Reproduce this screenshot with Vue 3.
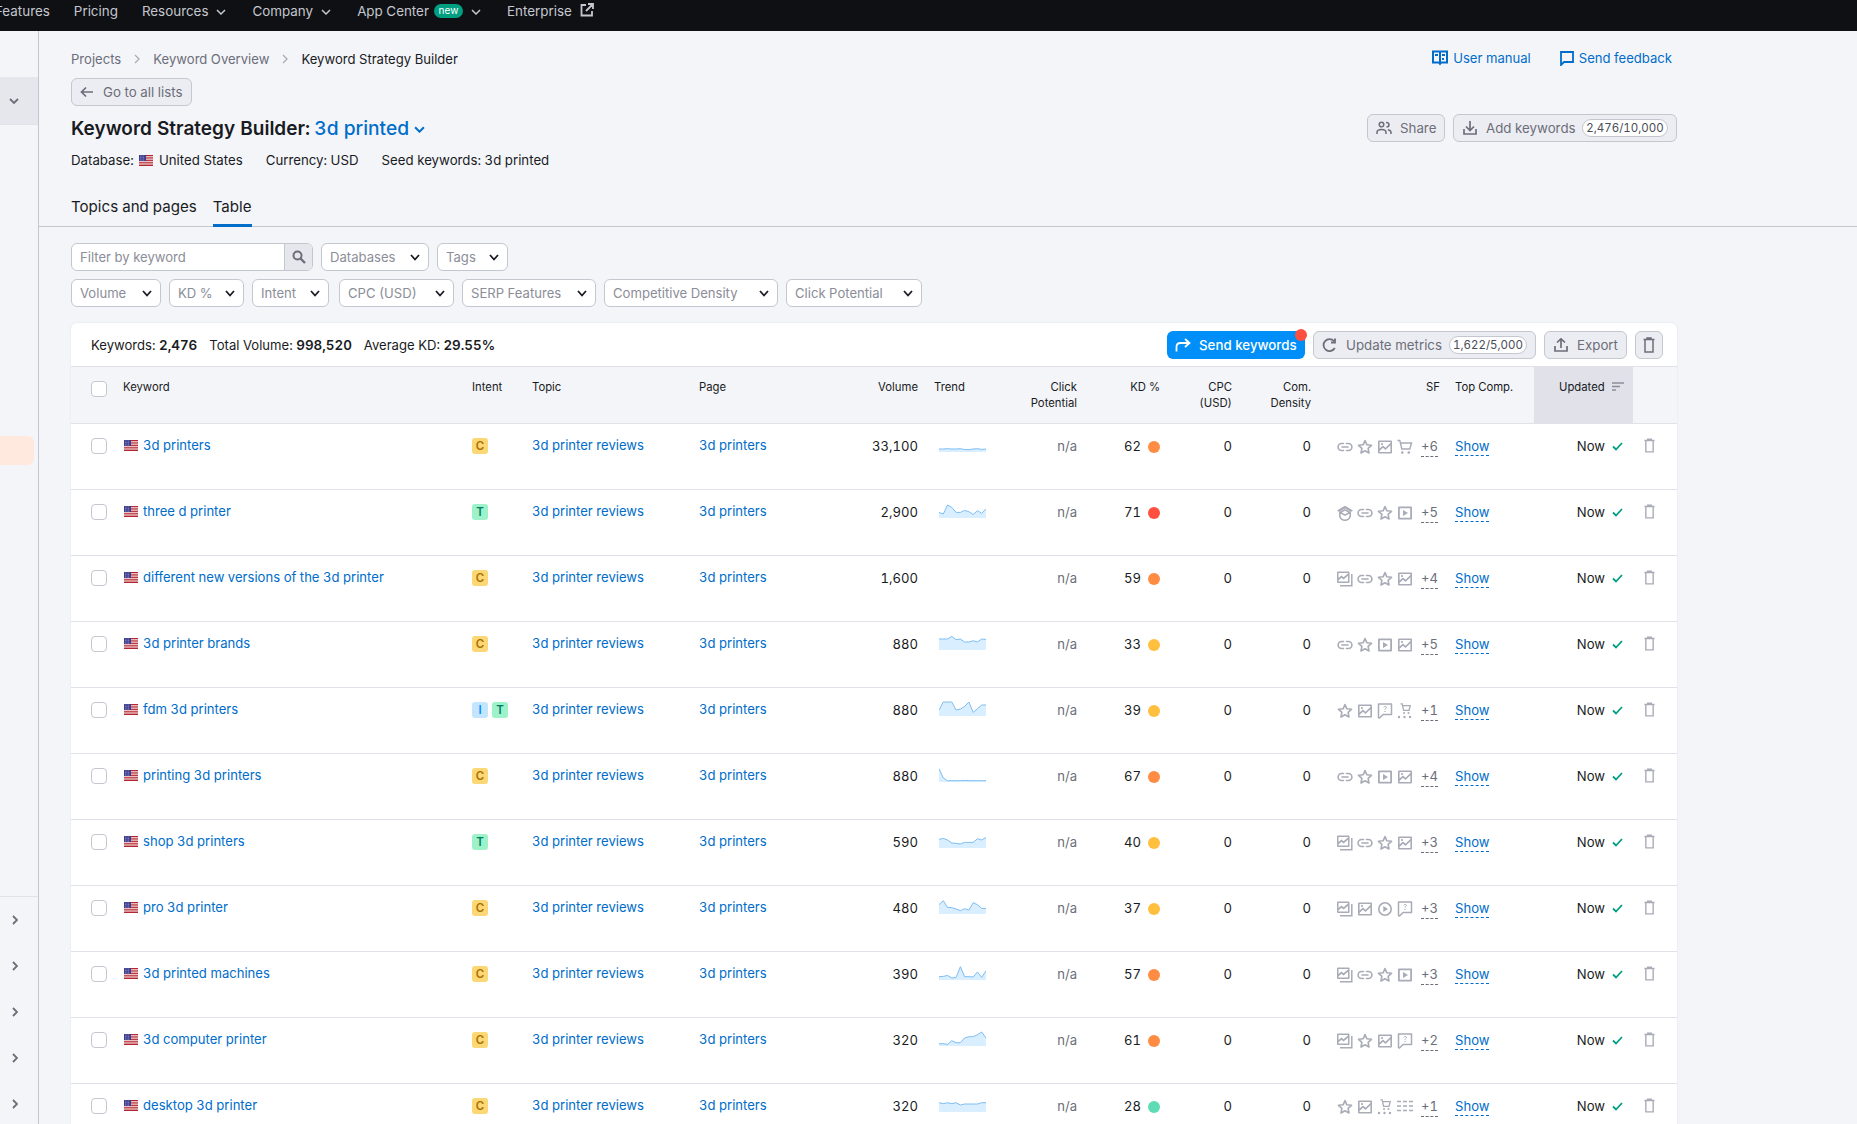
<template>
  <div class="page">
    <svg class="defs" width="0" height="0">
      <symbol id="i-link" viewBox="0 0 16 16">
        <path d="M6.5 4.5H4.6a3.5 3.5 0 0 0 0 7h1.9M9.5 4.5h1.9a3.5 3.5 0 0 1 0 7H9.5M5 8h6" fill="none" stroke="currentColor" stroke-width="1.6" stroke-linecap="round" />
      </symbol>
      <symbol id="i-star" viewBox="0 0 16 16">
        <path d="M8 1.600l1.900 4.200 4.600.5-3.400 3.100.9 4.600L8 11.700 4 14l.9-4.600L1.500 6.300l4.600-.5z" fill="none" stroke="currentColor" stroke-width="1.6" stroke-linejoin="round" />
      </symbol>
      <symbol id="i-image" viewBox="0 0 16 16">
        <path fill-rule="evenodd" d="M2 1.500h12a1 1 0 0 1 1 1v11a1 1 0 0 1-1 1H2a1 1 0 0 1-1-1v-11a1 1 0 0 1 1-1zM2.600 3v6.500L6 6.500l2.500 2.300L13.400 4V3zM13.400 6.200L8.500 11 6 8.700l-3.400 3V13h10.800z" fill="currentColor" />
        <circle cx="5" cy="5" r="1.100" fill="currentColor" />
      </symbol>
      <symbol id="i-stack" viewBox="0 0 16 16">
        <path fill-rule="evenodd" d="M1 .5h10.500a1 1 0 0 1 1 1V11a1 1 0 0 1-1 1H1a1 1 0 0 1-1-1V1.500a1 1 0 0 1 1-1zM1.500 2v5l3-2.500 2 1.800L11 2.500V2zM11 4.700L6.500 8.500l-2-1.800-3 2.500v1.300H11z" fill="currentColor" />
        <path d="M14.800 3v11.800H3" fill="none" stroke="currentColor" stroke-width="1.500" />
      </symbol>
      <symbol id="i-cart" viewBox="0 0 16 16">
        <path d="M.5 1.500h2.300l2 8.500h8l1.700-6H4" fill="none" stroke="currentColor" stroke-width="1.400" />
        <circle cx="5.300" cy="13.500" r="1.300" fill="currentColor" />
        <circle cx="11.800" cy="13.500" r="1.300" fill="currentColor" />
      </symbol>
      <symbol id="i-cartdots" viewBox="0 0 16 16">
        <path d="M3.500 .8h1.700l1.400 6.500h5.400l1.200-4.700H5.500" fill="none" stroke="currentColor" stroke-width="1.300" />
        <circle cx="7" cy="10" r="1" fill="currentColor" />
        <circle cx="11.500" cy="10" r="1" fill="currentColor" />
        <circle cx="2" cy="14" r="1.200" fill="currentColor" />
        <circle cx="7.500" cy="14" r="1.200" fill="currentColor" />
        <circle cx="13" cy="14" r="1.200" fill="currentColor" />
      </symbol>
      <symbol id="i-play" viewBox="0 0 16 16">
        <path fill-rule="evenodd" d="M2 1.500h12a1 1 0 0 1 1 1v11a1 1 0 0 1-1 1H2a1 1 0 0 1-1-1v-11a1 1 0 0 1 1-1zM2.800 3.200v9.600h10.400V3.200z" fill="currentColor" />
        <path d="M6 5l5 3-5 3z" fill="currentColor" />
      </symbol>
      <symbol id="i-playc" viewBox="0 0 16 16">
        <circle cx="8" cy="8" r="6.200" fill="none" stroke="currentColor" stroke-width="1.600" />
        <path d="M6.300 5l4.700 3-4.700 3z" fill="currentColor" />
      </symbol>
      <symbol id="i-question" viewBox="0 0 16 16">
        <path d="M1.500 1h13v10.500H6L2.500 15l-1-.5z" fill="none" stroke="currentColor" stroke-width="1.500" stroke-linejoin="round" />
        <path d="M6.800 4.300c.3-1 2.600-1.200 2.700.2.100 1-1.500 1-1.500 2.100" fill="none" stroke="currentColor" stroke-width="1" />
        <circle cx="8" cy="8.400" r=".7" fill="currentColor" />
      </symbol>
      <symbol id="i-cap" viewBox="0 0 16 16">
        <path d="M8 .8L16 5.500l-2.200 1.400L8 3.400 2.200 6.900 0 5.500z" fill="currentColor" />
        <path d="M2.800 7v4.500C3.800 14 6 15.300 8 15.300s4.200-1.300 5.200-3.800V7M3.200 7.500L8 4.800l4.800 2.700L8 10.200z" fill="none" stroke="currentColor" stroke-width="1.500" />
      </symbol>
      <symbol id="i-list" viewBox="0 0 16 16">
        <path d="M0 2.500h4M6 2.500h4M12 2.500h4M0 7h4M6 7h4M12 7h4M0 11.500h4M6 11.500h4M12 11.500h4" fill="none" stroke="currentColor" stroke-width="1.500" />
      </symbol>
      <symbol id="i-flag" viewBox="0 0 14 11">
        <rect width="14" height="11" fill="#fff" />
        <path d="M0 .5h14M0 2.200h14M0 3.900h14M0 5.600h14M0 7.300h14M0 9h14M0 10.500h14" stroke="#b3262f" stroke-width="1" />
        <rect width="7" height="6" fill="#3c3b8e" />
        <path d="M1 1h5M1 2.500h5M1 4h5M1 5.200h5" stroke="#b9bcdc" stroke-width=".6" stroke-dasharray=".8 .8" />
      </symbol>
      <symbol id="i-trash" viewBox="0 0 12 16">
        <path d="M.5 2.500h11M4 2.500V1h4v1.500M2 2.500V15h8V2.500" fill="none" stroke="currentColor" stroke-width="1.500" />
      </symbol>
    </svg>

    <nav class="topnav">
      <span class="nav-item first">Features</span>
      <span class="nav-item">Pricing</span>
      <span class="nav-item">Resources<svg class="nav-chev" viewBox="0 0 10 6"><path d="M1 1l4 4 4-4" /></svg></span>
      <span class="nav-item">Company<svg class="nav-chev" viewBox="0 0 10 6"><path d="M1 1l4 4 4-4" /></svg></span>
      <span class="nav-item">App Center<span class="new">new</span><svg class="nav-chev" viewBox="0 0 10 6"><path d="M1 1l4 4 4-4" /></svg></span>
      <span class="nav-item">Enterprise
        <svg class="nav-ext" viewBox="0 0 14 14"><path d="M6 2H1.500v10.500H12V8M8 1h5v5M13 1L6 8" /></svg>
      </span>
    </nav>

    <div class="layout">
      <aside class="sidebar">
        <div class="side-panel"><svg class="side-chev" viewBox="0 0 10 6"><path d="M1 1l4 4 4-4" /></svg></div>
        <div class="side-active"></div>
        <div class="side-foot">
          <div v-for="n in 5" :key="n" class="side-row">
            <svg class="side-right" viewBox="0 0 6 10"><path d="M1 1l4 4-4 4" /></svg>
          </div>
        </div>
      </aside>

      <main class="main">
        <div class="pad">
          <div class="crumbs-row">
            <div class="crumbs">
              <span>Projects</span>
              <svg class="crumb-sep" viewBox="0 0 6 10"><path d="M1 1l4 4-4 4" /></svg>
              <span>Keyword Overview</span>
              <svg class="crumb-sep" viewBox="0 0 6 10"><path d="M1 1l4 4-4 4" /></svg>
              <span class="cur">Keyword Strategy Builder</span>
            </div>
            <div class="help">
              <a class="help-link">
                <svg class="help-ic" viewBox="0 0 16 16">
                  <path fill-rule="evenodd" d="M0 .5h16v13H9.500L8 15.500 6.500 13.500H0zM2 2.500v9h5v-9zM9 2.500v9h5v-9z" fill="#006dca" />
                  <path d="M3 4h3v2H3zM10 4h3v2h-3zM10 8h2v2h-2z" fill="#006dca" />
                </svg>
                User manual
              </a>
              <a class="help-link feedback">
                <svg class="help-ic small" viewBox="0 0 14 15"><path d="M1 1h12v10H4l-3 3z" fill="none" stroke="#006dca" stroke-width="1.800" /></svg>
                Send feedback
              </a>
            </div>
          </div>

          <button class="btn back">
            <svg class="btn-ic" viewBox="0 0 14 12"><path d="M13 6H2M6 1.500L1.500 6 6 10.500" fill="none" stroke="currentColor" stroke-width="1.700" /></svg>
            Go to all lists
          </button>

          <div class="title-row">
            <h1 class="title">Keyword Strategy Builder: <span class="title-name">3d printed</span>
              <svg class="title-chev" viewBox="0 0 10 6"><path d="M1 1l4 4 4-4" /></svg>
            </h1>
            <div class="title-actions">
              <button class="btn share">
                <svg class="btn-ic wide" viewBox="0 0 16 14">
                  <circle cx="5.500" cy="3.500" r="2.300" fill="none" stroke="currentColor" stroke-width="1.500" />
                  <path d="M1 13v-1.500C1 9.500 3 8.500 5.500 8.500S10 9.500 10 11.500V13M10 1.500c2 0 3 1 3 2.200s-1 2.200-2.500 2.300M12 8.800c1.800.3 3 1.200 3 3V13" fill="none" stroke="currentColor" stroke-width="1.500" />
                </svg>
                Share
              </button>
              <button class="btn add">
                <svg class="btn-ic wide" viewBox="0 0 14 14"><path d="M7 0v9M3 5.500L7 9.500l4-4M1 8v5h12V8" fill="none" stroke="currentColor" stroke-width="1.700" /></svg>
                Add keywords
                <span class="pill pill-add">2,476/10,000</span>
              </button>
            </div>
          </div>

          <div class="meta">
            <span class="meta-item">Database: <svg class="flag top"><use href="#i-flag" /></svg> United States</span>
            <span class="meta-item">Currency: USD</span>
            <span class="meta-item">Seed keywords: 3d printed</span>
          </div>
        </div>

        <div class="tabs">
          <span class="tab">Topics and pages</span>
          <span class="tab active">Table</span>
        </div>

        <div class="pad">
          <div class="filters">
            <div class="search">
              <span class="search-text">Filter by keyword</span>
              <span class="search-btn">
                <svg viewBox="0 0 14 14" width="14" height="14"><circle cx="5.500" cy="5.500" r="4" fill="none" stroke="#6c6e79" stroke-width="2" /><path d="M8.500 8.500l4.500 4.500" stroke="#6c6e79" stroke-width="2.400" /></svg>
              </span>
            </div>
            <span v-for="f in topFilters" :key="f.label" class="select" :style="{ width: f.w + 'px' }">
              {{ f.label }}
              <svg class="sel-chev" viewBox="0 0 10 7"><path d="M1 1l4 4.500L9 1" /></svg>
            </span>
          </div>
          <div class="filters second">
            <span v-for="f in filters" :key="f.label" class="select" :class="{ spaced: f.spaced }" :style="{ width: f.w + 'px' }">
              {{ f.label }}
              <svg class="sel-chev" viewBox="0 0 10 7"><path d="M1 1l4 4.500L9 1" /></svg>
            </span>
          </div>

          <section class="card">
            <div class="summary">
              <div class="totals">
                <span>Keywords: <b>2,476</b></span>
                <span>Total Volume: <b>998,520</b></span>
                <span>Average KD: <b>29.55%</b></span>
              </div>
              <div class="summary-actions">
                <button class="btn send">
                  <svg class="btn-ic wide" viewBox="0 0 16 14"><path d="M1.500 13.500V9c0-2.500 1.500-4 4-4H14M10 1l4.500 4L10 9" fill="none" stroke="#fff" stroke-width="1.800" /></svg>
                  Send keywords
                  <span class="dot-new"></span>
                </button>
                <button class="btn update">
                  <svg class="btn-ic wide" viewBox="0 0 14 14"><path d="M11.800 10A6 6 0 1 1 11 3M12 .5v4H8" fill="none" stroke="currentColor" stroke-width="1.800" /></svg>
                  Update metrics
                  <span class="pill pill-update">1,622/5,000</span>
                </button>
                <button class="btn export">
                  <svg class="btn-ic wide" viewBox="0 0 14 14"><path d="M7 10V1M3 4.500L7 .8l4 3.700M1 8v5h12V8" fill="none" stroke="currentColor" stroke-width="1.700" /></svg>
                  Export
                </button>
                <button class="btn bin">
                  <svg class="bin-ic"><use href="#i-trash" /></svg>
                </button>
              </div>
            </div>

            <div class="grid head">
              <div class="c-check"><span class="checkbox"></span></div>
              <div class="h h-kw">Keyword</div>
              <div class="h">Intent</div>
              <div class="h">Topic</div>
              <div class="h">Page</div>
              <div class="h r">Volume</div>
              <div class="h c-trend">Trend</div>
              <div class="h r">Click<br />Potential</div>
              <div class="h r">KD %</div>
              <div class="h r">CPC<br />(USD)</div>
              <div class="h r">Com.<br />Density</div>
              <div class="h r">SF</div>
              <div class="h c-top">Top Comp.</div>
              <div class="h c-upd sorted">
                Updated
                <svg class="sort-ic" viewBox="0 0 12 9"><path d="M0 1h12M0 4.500h8M0 8h4" stroke="#8b8d98" stroke-width="1.500" /></svg>
              </div>
              <div></div>
            </div>

            <div v-for="row in rows" :key="row.kw" class="grid row">
              <div class="c-check"><span class="checkbox"></span></div>
              <div class="kw"><svg class="flag"><use href="#i-flag" /></svg><a class="link">{{ row.kw }}</a></div>
              <div class="intents">
                <span v-for="i in row.intent" :key="i" class="badge" :class="'b-' + i">{{ i }}</span>
              </div>
              <div class="kw-cell"><a class="link">3d printer reviews</a></div>
              <div class="kw-cell"><a class="link">3d printers</a></div>
              <div class="cell r">{{ row.vol }}</div>
              <div class="c-trend spark-cell">
                <svg v-if="row.trend" class="spark" viewBox="0 0 47 17">
                  <polygon :points="areaPoints(row.trend)" fill="#d9eefe" />
                  <polyline :points="linePoints(row.trend)" fill="none" stroke="#7cbdf3" stroke-width="1" />
                </svg>
              </div>
              <div class="cell r muted">n/a</div>
              <div class="cell r kd">{{ row.kd }}<span class="kd-dot" :style="{ background: kdColor(row.kd) }"></span></div>
              <div class="cell r">0</div>
              <div class="cell r">0</div>
              <div class="cell sf">
                <svg v-for="(ic, idx) in row.sf" :key="idx" class="sf-ic"><use :href="'#i-' + ic" /></svg>
                <span class="more">{{ row.more }}</span>
              </div>
              <div class="cell c-top"><a class="show">Show</a></div>
              <div class="cell updated">Now
                <svg class="check" viewBox="0 0 11 9"><path d="M1 4.500l3 3L10 1" fill="none" stroke="#009f81" stroke-width="1.800" /></svg>
              </div>
              <div class="cell c-del"><svg class="del"><use href="#i-trash" /></svg></div>
            </div>
          </section>
        </div>
      </main>
    </div>
  </div>
</template>

<script setup>
const topFilters = [
  { label: "Databases", w: 108 },
  { label: "Tags", w: 71 },
];

const filters = [
  { label: "Volume", w: 90 },
  { label: "KD %", w: 75 },
  { label: "Intent", w: 77 },
  { label: "CPC (USD)", w: 115, spaced: true },
  { label: "SERP Features", w: 134 },
  { label: "Competitive Density", w: 174 },
  { label: "Click Potential", w: 136 },
];

const rows = [
  { kw: "3d printers", intent: ["C"], vol: "33,100", kd: 62, sf: ["link", "star", "image", "cart"], more: "+6", trend: [3, 3, 3.3, 3, 3, 3.3, 2.5, 2.3, 3, 3.3, 2.6, 3] },
  { kw: "three d printer", intent: ["T"], vol: "2,900", kd: 71, sf: ["cap", "link", "star", "play"], more: "+5", trend: [5.6, 4, 13, 10.6, 5.6, 5.6, 7.6, 6.3, 3.6, 7.3, 4.6, 9.3] },
  { kw: "different new versions of the 3d printer", intent: ["C"], vol: "1,600", kd: 59, sf: ["stack", "link", "star", "image"], more: "+4", trend: null },
  { kw: "3d printer brands", intent: ["C"], vol: "880", kd: 33, sf: ["link", "star", "play", "image"], more: "+5", trend: [11, 11, 11, 13.6, 10.3, 11, 8, 8, 9.3, 8, 11, 10.6] },
  { kw: "fdm 3d printers", intent: ["I", "T"], vol: "880", kd: 39, sf: ["star", "image", "question", "cartdots"], more: "+1", trend: [6, 14, 14, 14, 6, 7, 9.5, 14, 3.6, 7.3, 11, 11] },
  { kw: "printing 3d printers", intent: ["C"], vol: "880", kd: 67, sf: ["link", "star", "play", "image"], more: "+4", trend: [13.3, 4, 1.3, 1.3, 1.3, 1.3, 1.5, 1.3, 1.3, 1.3, 1.3, 1.3] },
  { kw: "shop 3d printers", intent: ["T"], vol: "590", kd: 40, sf: ["stack", "link", "star", "image"], more: "+3", trend: [8.6, 9.6, 8, 5, 4.6, 4, 5.6, 5.6, 5.6, 9.3, 8, 10.6] },
  { kw: "pro 3d printer", intent: ["C"], vol: "480", kd: 37, sf: ["stack", "image", "playc", "question"], more: "+3", trend: [9.3, 13.3, 6.6, 6.3, 5, 3.3, 5.3, 4, 11.3, 9.3, 5.6, 5.6] },
  { kw: "3d printed machines", intent: ["C"], vol: "390", kd: 57, sf: ["stack", "link", "star", "play"], more: "+3", trend: [3.3, 3.6, 4.6, 2, 2.6, 13.3, 3.3, 3.3, 3, 8, 2.6, 9.3] },
  { kw: "3d computer printer", intent: ["C"], vol: "320", kd: 61, sf: ["stack", "star", "image", "question"], more: "+2", trend: [2.3, 2.3, 1.6, 5.3, 3.3, 3.3, 8, 9.3, 9.3, 11.3, 14, 8] },
  { kw: "desktop 3d printer", intent: ["C"], vol: "320", kd: 28, sf: ["star", "image", "cartdots", "list"], more: "+1", trend: [9.3, 8.3, 9.3, 8.3, 9.3, 7, 8, 8, 8, 8, 9.3, 9.3] },
];

// trend values are heights above the baseline of the sparkline
const linePoints = (vals) =>
  vals.map((v, i) => `${((i * 47) / (vals.length - 1)).toFixed(1)},${(17 - v).toFixed(1)}`).join(" ");

const areaPoints = (vals) => `0,17 ${linePoints(vals)} 47,17`;

const kdColor = (kd) => {
  if (kd >= 70) return "#ff4f3f";
  if (kd >= 50) return "#ff8c43";
  if (kd >= 30) return "#ffbf3f";
  return "#5fdcb3";
};
</script>

<style>
html,
body {
  margin: 0;
  background: #f4f5f9;
}
</style>

<style scoped>
.page {
  width: 1857px;
  height: 1124px;
  overflow: hidden;
  background: #f4f5f9;
  color: #191b23;
  font-family: Inter, "Liberation Sans", sans-serif;
  font-size: 13.1px;
  line-height: 20px;
  font-variant-numeric: tabular-nums;
}

.defs {
  position: absolute;
}

.topnav {
  display: flex;
  height: 31px;
  background: #0f1014;
  color: #c4c7cf;
  font-size: 13.4px;
  line-height: 23px;
  overflow: hidden;
}

.nav-item {
  display: flex;
  align-items: flex-start;
  white-space: nowrap;
  margin-right: 24px;
}

.nav-item.first {
  margin-left: -5px;
}

.nav-chev {
  width: 10px;
  height: 6px;
  margin: 9px 2px 0 8px;
  fill: none;
  stroke: #c4c7cf;
  stroke-width: 1.5;
}

.new {
  margin: 4px 0 0 5px;
  width: 29px;
  height: 14px;
  border-radius: 7px;
  background: #009f81;
  color: #fff;
  font-size: 10px;
  line-height: 13px;
  text-align: center;
}

.nav-ext {
  width: 14px;
  height: 14px;
  margin: 3px 0 0 8px;
  fill: none;
  stroke: #c4c7cf;
  stroke-width: 1.8;
}

.layout {
  display: flex;
  height: 1093px;
}

.sidebar {
  width: 38px;
  flex: none;
  border-right: 1px solid #c4c7cf;
  display: flex;
  flex-direction: column;
}

.side-panel {
  flex: none;
  height: 47px;
  margin-top: 46px;
  background: #e6e7ed;
  border-bottom: 1px solid #e0e1e9;
  display: flex;
  align-items: center;
  padding-left: 9px;
}

.side-chev {
  width: 10px;
  height: 6px;
  fill: none;
  stroke: #6c6e79;
  stroke-width: 1.8;
}

.side-active {
  flex: none;
  width: 34px;
  height: 29px;
  margin-top: 311px;
  background: #ffe9df;
  border-radius: 0 6px 6px 0;
}

.side-foot {
  flex: none;
  margin-top: 431px;
  border-top: 1px solid #e0e1e9;
}

.side-row {
  height: 46px;
  display: flex;
  align-items: center;
  padding-left: 12px;
}

.side-right {
  width: 6px;
  height: 10px;
  fill: none;
  stroke: #6c6e79;
  stroke-width: 1.8;
}

.main {
  flex: 1;
  min-width: 0;
}

.pad {
  padding: 0 180px 0 32px;
}

.crumbs-row {
  display: flex;
  justify-content: space-between;
  padding-top: 18px;
  height: 38px;
  box-sizing: border-box;
}

.crumbs {
  display: flex;
  align-items: center;
  height: 20px;
  color: #6c6e79;
}

.crumbs .cur {
  color: #191b23;
}

.crumb-sep {
  width: 6px;
  height: 10px;
  margin: 0 13px;
  fill: none;
  stroke: #a9abb6;
  stroke-width: 1.3;
}

.help {
  display: flex;
  gap: 29px;
  padding-right: 5px;
}

.help-link {
  display: flex;
  align-items: center;
  gap: 5px;
  height: 18px;
  color: #006dca;
}

.help-ic {
  width: 16px;
  height: 16px;
}

.help-ic.small {
  width: 14px;
  height: 15px;
}

.btn {
  display: inline-flex;
  align-items: center;
  box-sizing: border-box;
  height: 28px;
  padding: 0 8px;
  border: 1px solid #c4c7cf;
  border-radius: 6px;
  background: #ecedf2;
  color: #6c6e79;
  font: inherit;
  font-size: 13.3px;
  white-space: nowrap;
}

.btn-ic {
  width: 14px;
  height: 12px;
  margin-right: 9px;
  flex: none;
}

.btn-ic.wide {
  width: 16px;
  height: 14px;
  margin-right: 8px;
}

.back {
  width: 121px;
  margin-top: 9px;
}

.title-row {
  display: flex;
  justify-content: space-between;
  height: 28px;
  margin-top: 8px;
}

.title {
  margin: 0;
  height: 28px;
  font-size: 19px;
  font-weight: 600;
  line-height: 28px;
  white-space: nowrap;
}

.title-name {
  color: #006dca;
  font-size: 19.2px;
  font-weight: 500;
  margin-left: -1px;
}

.title-chev {
  width: 11px;
  height: 7px;
  margin: 0 0 2px 5px;
  fill: none;
  stroke: #006dca;
  stroke-width: 1.8;
}

.title-actions {
  display: flex;
  gap: 8px;
}

.share {
  width: 78px;
}

.add {
  width: 224px;
}

.pill {
  box-sizing: border-box;
  height: 18px;
  margin-left: auto;
  border: 1px solid #c4c7cf;
  border-radius: 9px;
  background: #fff;
  color: #4a4c57;
  font-size: 11.5px;
  line-height: 16px;
  text-align: center;
}

.pill-add {
  width: 86px;
}

.pill-update {
  width: 78px;
}

.meta {
  display: flex;
  gap: 23px;
  height: 20px;
  margin-top: 8px;
  font-size: 13.25px;
}

.meta-item {
  white-space: nowrap;
}

.flag {
  width: 14px;
  height: 11px;
  flex: none;
}

.flag.top {
  margin: 0 2px;
  vertical-align: -1px;
}

.tabs {
  display: flex;
  gap: 16px;
  box-sizing: border-box;
  height: 44px;
  margin-top: 13px;
  padding-left: 32px;
  border-bottom: 1px solid #c4c7cf;
}

.tab {
  height: 44px;
  box-sizing: border-box;
  padding-top: 12px;
  font-size: 15.1px;
  line-height: 24px;
}

.tab.active {
  border-bottom: 3px solid #006dca;
}

.filters {
  display: flex;
  gap: 8px;
  margin-top: 16px;
}

.filters.second {
  margin-top: 8px;
}

.search {
  display: flex;
  box-sizing: border-box;
  width: 242px;
  height: 28px;
  border: 1px solid #c4c7cf;
  border-radius: 6px;
  background: #fff;
  overflow: hidden;
}

.search-text {
  flex: 1;
  padding-left: 8px;
  color: #8b8d98;
  line-height: 26px;
}

.search-btn {
  width: 27px;
  display: flex;
  align-items: center;
  justify-content: center;
  background: #e6e7ed;
  border-left: 1px solid #c4c7cf;
}

.select {
  display: flex;
  align-items: center;
  justify-content: space-between;
  box-sizing: border-box;
  height: 28px;
  padding: 0 8px;
  border: 1px solid #c4c7cf;
  border-radius: 6px;
  background: #fff;
  color: #8b8d98;
  white-space: nowrap;
}

.select.spaced {
  margin-left: 2px;
}

.sel-chev {
  width: 10px;
  height: 7px;
  fill: none;
  stroke: #191b23;
  stroke-width: 1.8;
}

.card {
  margin-top: 16px;
  background: #fff;
  border-radius: 6px 6px 0 0;
  box-shadow: 0 0 2px rgba(25, 27, 35, 0.1);
}

.summary {
  display: flex;
  justify-content: space-between;
  align-items: center;
  box-sizing: border-box;
  height: 44px;
  padding: 0 14px 0 20px;
  border-bottom: 1px solid #e0e1e9;
}

.totals {
  display: flex;
  gap: 12px;
}

.totals b {
  font-weight: 600;
  font-size: 13.4px;
}

.summary-actions {
  display: flex;
  gap: 8px;
}

.send {
  position: relative;
  width: 138px;
  background: #008ff8;
  border: none;
  color: #fff;
  font-weight: 500;
}

.dot-new {
  position: absolute;
  top: -2px;
  right: -2px;
  width: 12px;
  height: 12px;
  border-radius: 50%;
  background: #ff4f3f;
}

.update {
  width: 223px;
}

.export {
  width: 83px;
}

.bin {
  width: 28px;
  padding: 0;
  justify-content: center;
}

.bin-ic {
  width: 12px;
  height: 16px;
  color: #6c6e79;
}

.grid {
  display: grid;
  grid-template-columns: 53px 348px 60px 167px 151px 68px 92px 67px 83px 72px 79px 129px 94px 99px 44px;
}

.head {
  height: 57px;
  box-sizing: border-box;
  background: #f4f5f9;
  border-bottom: 1px solid #e0e1e9;
}

.h {
  padding-top: 12px;
  font-size: 11.3px;
  line-height: 16px;
  color: #191b23;
}

.h-kw {
  margin-left: -1px;
}

.r {
  text-align: right;
}

.c-check {
  padding: 14px 0 0 20px;
}

.checkbox {
  display: block;
  box-sizing: border-box;
  width: 16px;
  height: 16px;
  border: 1px solid #c4c7cf;
  border-radius: 4px;
  background: #fff;
}

.c-trend {
  padding-left: 16px;
}

.c-top {
  padding-left: 15px;
}

.sorted {
  display: flex;
  align-items: flex-start;
  gap: 7px;
  padding-left: 25px;
  background: #e0e1e9;
}

.sort-ic {
  width: 12px;
  height: 9px;
  margin-top: 3px;
}

.row {
  height: 66px;
  box-sizing: border-box;
  border-bottom: 1px solid #e0e1e9;
}

.kw {
  display: flex;
  align-items: center;
  gap: 5px;
  height: 20px;
  margin-top: 11px;
  white-space: nowrap;
}

.kw-cell {
  padding-top: 11px;
  white-space: nowrap;
}

.link {
  color: #006dca;
}

.cell {
  padding-top: 12px;
  white-space: nowrap;
}

.muted {
  color: #6c6e79;
}

.intents {
  display: flex;
  gap: 4px;
  padding-top: 14px;
}

.badge {
  box-sizing: border-box;
  width: 16px;
  height: 16px;
  border-radius: 3px;
  font-size: 11.5px;
  font-weight: 600;
  line-height: 16px;
  text-align: center;
}

.b-C {
  background: #fcd775;
  color: #a86f00;
}

.b-T {
  background: #9ef2c9;
  color: #007c65;
}

.b-I {
  background: #c4e5fe;
  color: #008ff8;
}

.spark-cell {
  padding-top: 11px;
  padding-left: 21px;
}

.spark {
  display: block;
  width: 47px;
  height: 17px;
}

.kd {
  display: flex;
  justify-content: flex-end;
  align-items: flex-start;
  gap: 7px;
}

.kd-dot {
  width: 12px;
  height: 12px;
  margin-top: 5px;
  border-radius: 50%;
}

.sf {
  display: flex;
  align-items: flex-start;
  padding-left: 26px;
}

.sf-ic {
  width: 16px;
  height: 16px;
  margin: 3px 4px 0 0;
  color: #a9abb6;
  flex: none;
}

.more {
  margin-left: 4px;
  color: #6c6e79;
  height: 20px;
  border-bottom: 1px dashed #6c6e79;
}

.show {
  color: #006dca;
  border-bottom: 1px dashed #006dca;
  padding-bottom: 1px;
}

.updated {
  display: flex;
  align-items: flex-start;
  justify-content: flex-end;
  gap: 7px;
  padding-right: 10px;
}

.check {
  width: 11px;
  height: 9px;
  margin-top: 6px;
}

.c-del {
  padding: 14px 0 0 11px;
}

.del {
  display: block;
  width: 11px;
  height: 15px;
  color: #a9abb6;
}
</style>
